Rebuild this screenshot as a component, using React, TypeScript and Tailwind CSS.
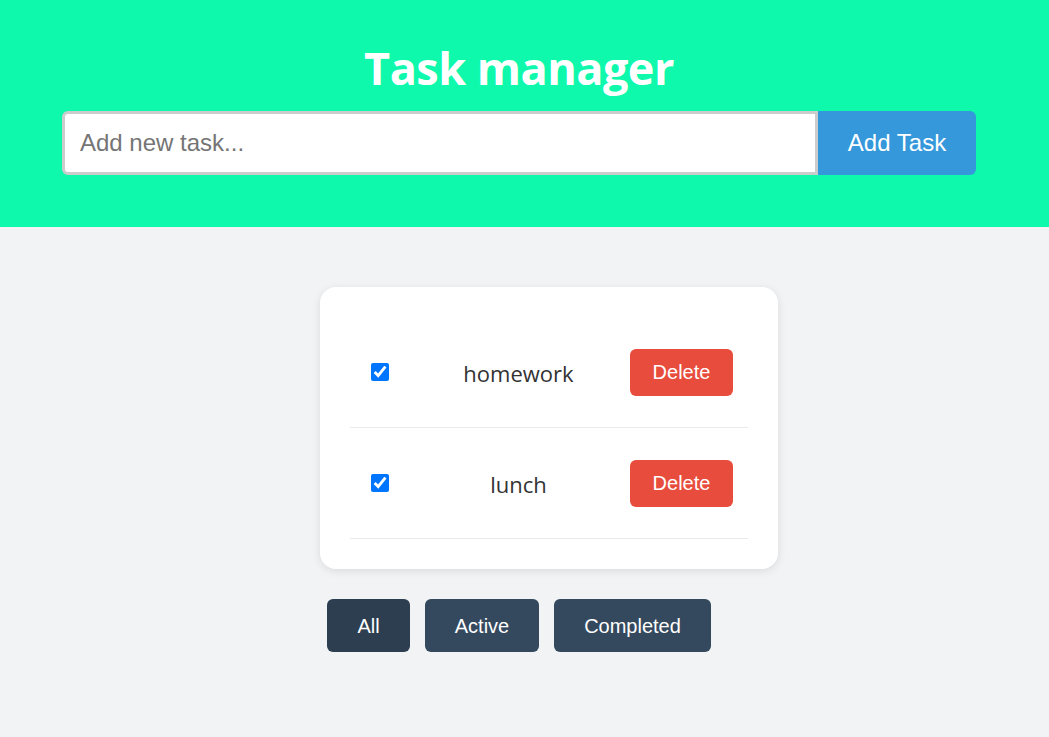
import React from "react";

export default function App() {
  const tasks = ["homework", "lunch"];
  return (
    <div className="min-h-[737px] bg-[#f2f3f5]" style={{ fontFamily: '"Liberation Sans", Arial, sans-serif' }}>
      <div className="h-[227px] bg-[#0ff9ac] flex flex-col items-center pt-[38px] pr-[11px]">
        <h1 className="text-white text-[45px] font-bold leading-[60px] tracking-[-0.5px]" style={{ fontFamily: '"Open Sans", sans-serif' }}>
          Task manager
        </h1>
        <div className="flex w-[914px] mt-[13px]">
          <input
            className="flex-1 h-[64px] border-[3px] border-[#cccccc] rounded-l-[6px] bg-white px-[15px] text-[24px] text-[#333] placeholder:text-[#757575] outline-none"
            placeholder="Add new task..."
          />
          <button className="w-[158px] h-[64px] bg-[#3498db] text-white text-[24px] rounded-r-[6px]">
            Add Task
          </button>
        </div>
      </div>
      <div className="flex justify-center pl-[49px] pt-[60px]">
        <div className="w-[458px] bg-white rounded-[16px] shadow-[0_2px_8px_rgba(0,0,0,0.1)] px-[30px] py-[30px]">
          {tasks.map((t) => (
            <div key={t} className="h-[111px] border-b border-[#eaeaea] flex items-center">
              <input type="checkbox" checked readOnly className="w-[18px] h-[18px] ml-[21px] accent-[#0075ff]" />
              <span className="flex-1 text-center pl-[18px] pt-[2px] text-[22px] text-[#333]" style={{ fontFamily: '"Open Sans", sans-serif' }}>
                {t}
              </span>
              <button className="w-[103px] h-[47px] bg-[#e74c3c] text-white text-[20px] rounded-[6px] mr-[15px]">
                Delete
              </button>
            </div>
          ))}
        </div>
      </div>
      <div className="flex justify-center gap-[15px] pr-[11px] mt-[30px]">
        <button className="w-[83px] h-[53px] bg-[#2c3e50] text-white text-[20px] rounded-[6px]">All</button>
        <button className="w-[114px] h-[53px] bg-[#34495e] text-white text-[20px] rounded-[6px]">Active</button>
        <button className="w-[157px] h-[53px] bg-[#34495e] text-white text-[20px] rounded-[6px]">Completed</button>
      </div>
    </div>
  );
}
